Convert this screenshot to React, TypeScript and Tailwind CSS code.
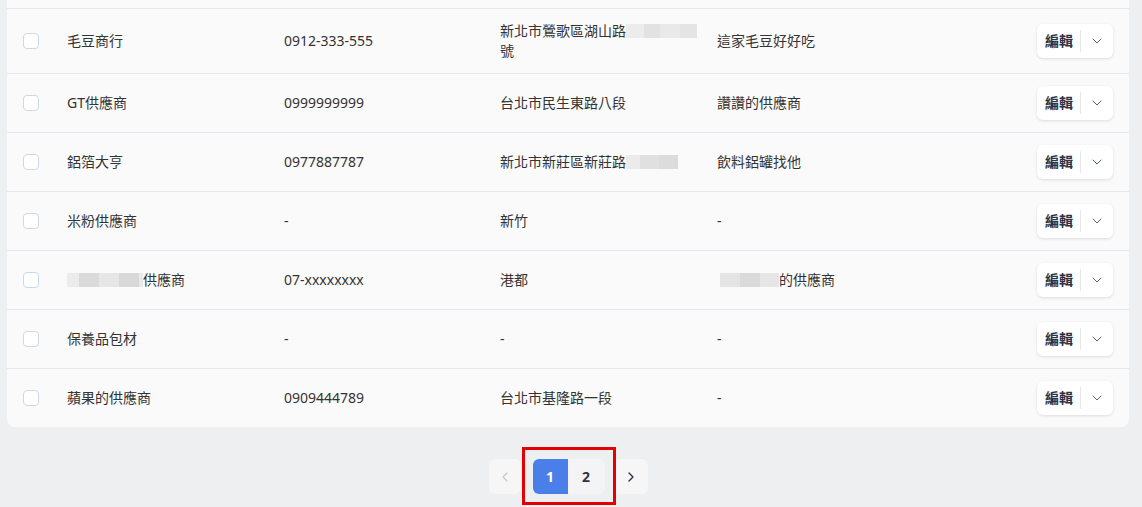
import { ChevronDown, ChevronLeft, ChevronRight } from 'lucide-react';

type Row = {
    name: React.ReactNode;
    phone: string;
    address: React.ReactNode;
    note: React.ReactNode;
};

// mosaic stand-in for the redacted parts of the screenshot
function Redacted({ widths }: { widths: { w: number; c: string }[] }) {
    return (
        <span className="inline-flex h-[14px] align-[-2px]">
            {widths.map((s, i) => (
                <span key={i} className="h-full" style={{ width: s.w, backgroundColor: s.c }} />
            ))}
        </span>
    );
}

const rows: Row[] = [
    {
        name: '毛豆商行',
        phone: '0912-333-555',
        address: (
            <>
                新北市鶯歌區湖山路
                <Redacted
                    widths={[
                        { w: 18, c: '#ececec' },
                        { w: 16, c: '#e2e2e2' },
                        { w: 20, c: '#e9e9e9' },
                        { w: 17, c: '#e4e4e4' },
                    ]}
                />
                號
            </>
        ),
        note: '這家毛豆好好吃',
    },
    { name: 'GT供應商', phone: '0999999999', address: '台北市民生東路八段', note: '讚讚的供應商' },
    {
        name: '鋁箔大亨',
        phone: '0977887787',
        address: (
            <>
                新北市新莊區新莊路
                <Redacted
                    widths={[
                        { w: 14, c: '#ebebeb' },
                        { w: 19, c: '#e0e0e0' },
                        { w: 19, c: '#dcdcdc' },
                    ]}
                />
            </>
        ),
        note: '飲料鋁罐找他',
    },
    { name: '米粉供應商', phone: '-', address: '新竹', note: '-' },
    {
        name: (
            <>
                <Redacted
                    widths={[
                        { w: 12, c: '#ececec' },
                        { w: 20, c: '#dadada' },
                        { w: 20, c: '#e6e6e6' },
                        { w: 20, c: '#d8d8d8' },
                        { w: 4, c: '#e8e8e8' },
                    ]}
                />
                供應商
            </>
        ),
        phone: '07-xxxxxxxx',
        address: '港都',
        note: (
            <>
                <span className="inline-block w-[3px]" />
                <Redacted
                    widths={[
                        { w: 20, c: '#e4e4e4' },
                        { w: 20, c: '#dadada' },
                        { w: 19, c: '#e6e6e6' },
                    ]}
                />
                的供應商
            </>
        ),
    },
    { name: '保養品包材', phone: '-', address: '-', note: '-' },
    { name: '蘋果的供應商', phone: '0909444789', address: '台北市基隆路一段', note: '-' },
];

function EditButton() {
    return (
        <div className="flex h-[34px] w-[76px] items-center rounded-md bg-white shadow-[0_1px_3px_rgba(0,0,0,0.12)]">
            <span className="shrink-0 whitespace-nowrap pl-2 pr-[7px] text-sm font-bold text-[#2d3344]">編輯</span>
            <span className="h-[22px] w-px bg-[#e6e7ea]" />
            <span className="flex flex-1 items-center justify-center text-[#5b6478]">
                <ChevronDown size={16} strokeWidth={1.5} />
            </span>
        </div>
    );
}

export default function App() {
    return (
        <div
            className="min-h-[507px] bg-[#eeeff1] pl-[7px] pr-[13px] text-sm text-[#333]"
            style={{ fontFamily: '"Noto Sans", "Noto Sans CJK TC", sans-serif' }}
        >
            {/* Supplier table card (scrolled, top is cut off) */}
            <div className="rounded-b-lg bg-[#fafafa]">
                <div className="h-[8px]" />
                {rows.map((r, i) => (
                    <div
                        key={i}
                        className="grid grid-cols-[60px_217px_216px_217px_1fr_auto] items-center border-t border-[#e6e8ee] py-3 leading-5"
                    >
                        <div className="pl-4">
                            <div className="h-4 w-4 rounded-[4px] border border-[#cad9ea] bg-white" />
                        </div>
                        <div className="pr-4">{r.name}</div>
                        <div className="pr-4">{r.phone}</div>
                        <div className="pr-4">{r.address}</div>
                        <div className="pr-4">{r.note}</div>
                        <div className="flex justify-end pr-4">
                            <EditButton />
                        </div>
                    </div>
                ))}
            </div>

            {/* Pagination */}
            <div className="mt-8 flex items-center justify-center">
                <button className="flex h-[35px] w-8 items-center justify-center rounded-md bg-[#f6f6f7] text-[#c5c8cf]">
                    <ChevronLeft size={16} strokeWidth={1.8} />
                </button>
                <div className="relative ml-3">
                    <div className="flex h-[35px] overflow-hidden rounded-md">
                        <button className="w-[35px] bg-[#4a7fea] text-sm font-bold text-white">1</button>
                        <button className="w-[37px] bg-[#f4f4f6] text-sm font-bold text-[#2d3344]">2</button>
                    </div>
                    {/* red highlight annotation */}
                    <span className="pointer-events-none absolute -inset-x-[11px] -top-[12px] -bottom-[11px] border-[3px] border-[#e30000]" />
                </div>
                <button className="ml-[9px] flex h-[35px] w-[34px] items-center justify-center rounded-md bg-[#f6f6f7] text-[#2d3344]">
                    <ChevronRight size={16} strokeWidth={2} />
                </button>
            </div>
        </div>
    );
}
